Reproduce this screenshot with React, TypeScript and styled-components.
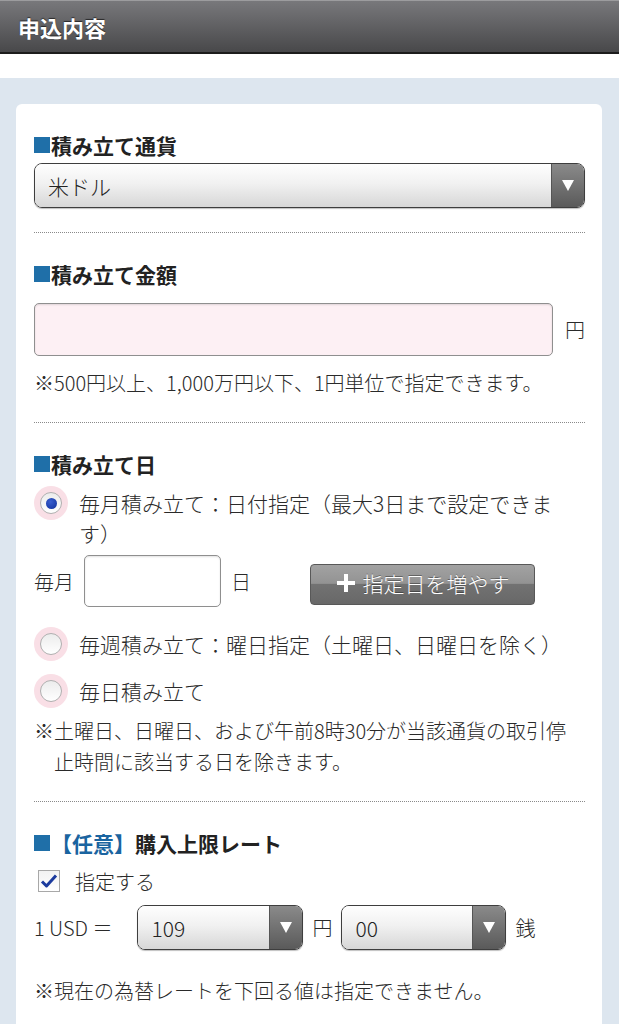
import React from 'react';
import styled, { createGlobalStyle } from 'styled-components';

const GlobalStyle = createGlobalStyle`
    html, body {
        margin: 0;
        padding: 0;
        background: #fff;
    }

    body {
        font-family: "Noto Sans CJK JP", "Noto Sans", sans-serif;
        font-weight: 300;
        color: #2a2a2a;
    }
`;

const Page = styled.div`
    width: 619px;
`;

const Header = styled.header`
    height: 51px;
    display: flex;
    align-items: center;
    padding-left: 18px;
    background: linear-gradient(#78787b, #48484a);
    border-top: 1px solid #9c9c9e;
    border-bottom: 2px solid #1c1c1c;
    color: #fff;
    font-size: 22px;
    font-weight: bold;
    text-shadow: 0 -1px 1px rgba(0, 0, 0, 0.6);
`;

const Main = styled.main`
    margin-top: 24px;
    background: #dde6ef;
    padding: 26px 17px 40px 16px;
`;

const Card = styled.div`
    background: #fff;
    border-radius: 6px;
    padding: 0 17px 0 18px;
`;

const Section = styled.section<{ last?: boolean }>`
    padding: 26px 0 24px;
    border-bottom: ${props => props.last ? 'none' : '1px dotted #8a8a8a'};
`;

const Heading = styled.h2`
    margin: 0;
    display: flex;
    align-items: center;
    font-size: 21px;
    line-height: 30px;
    font-weight: bold;
    color: #222;

    &::before {
        content: '';
        width: 16px;
        height: 16px;
        margin-right: 1px;
        background: #1f6fa8;
    }

    .optional {
        color: #1a64a0;
    }
`;

const SelectBox = styled.div<{ width?: number }>`
    display: flex;
    width: ${props => props.width ? props.width + 'px' : '100%'};
    height: 45px;
    box-sizing: border-box;
    border: 1px solid #3e3e3e;
    border-radius: 8px;
    overflow: hidden;
    box-shadow: 0 1px 1px rgba(0, 0, 0, 0.25);
    flex: none;

    .value {
        flex: 1;
        display: flex;
        align-items: center;
        padding-left: 13px;
        font-size: 21px;
        color: #222;
        background: linear-gradient(#fefefe, #f1f1f1 45%, #d7d7d7);
    }

    .arrow {
        width: 32px;
        display: flex;
        align-items: center;
        justify-content: center;
        border-left: 1px solid #555;
        background: linear-gradient(#8a8a8a, #5a5a5a);
    }

    .arrow::after {
        content: '';
        border-left: 6px solid transparent;
        border-right: 6px solid transparent;
        border-top: 11px solid #fff;
    }
`;

const Row = styled.div<{ top?: number; gap?: number }>`
    display: flex;
    align-items: center;
    margin-top: ${props => props.top || 0}px;
    gap: ${props => props.gap || 0}px;
    font-size: 20px;
`;

const Unit = styled.span<{ left?: number; right?: number }>`
    margin-left: ${props => props.left || 0}px;
    margin-right: ${props => props.right || 0}px;
    white-space: nowrap;
`;

const AmountInput = styled.input`
    flex: 1;
    height: 53px;
    box-sizing: border-box;
    border: 1px solid #8f8f8f;
    border-radius: 5px;
    background: #fdf0f4;
    box-shadow: inset 0 1px 2px rgba(0, 0, 0, 0.12);
    font-size: 20px;
    outline: none;
`;

const DayInput = styled.input`
    width: 137px;
    height: 52px;
    box-sizing: border-box;
    border: 1px solid #8f8f8f;
    border-radius: 5px;
    background: #fff;
    box-shadow: inset 0 1px 2px rgba(0, 0, 0, 0.12);
    font-size: 20px;
    outline: none;
`;

const Note = styled.p<{ top?: number }>`
    margin: ${props => props.top || 0}px 0 0;
    font-size: 20px;
    line-height: 31px;
    padding-left: 1em;
    text-indent: -1em;
    color: #2a2a2a;
`;

const RadioRow = styled.label<{ top?: number }>`
    display: flex;
    align-items: flex-start;
    margin-top: ${props => props.top || 0}px;
`;

const RadioHalo = styled.span`
    width: 34px;
    height: 34px;
    border-radius: 50%;
    background: #f9dfe6;
    flex: none;
    display: flex;
    align-items: center;
    justify-content: center;
`;

const RadioCircle = styled.span`
    width: 22px;
    height: 22px;
    box-sizing: border-box;
    border-radius: 50%;
    border: 1px solid #b0b0b0;
    background: linear-gradient(#ececec, #fff);
    display: flex;
    align-items: center;
    justify-content: center;
`;

const RadioDot = styled.span`
    width: 11px;
    height: 11px;
    border-radius: 50%;
    background: radial-gradient(circle at 40% 35%, #3a5fd0, #10309a);
`;

const RadioLabel = styled.span`
    margin-left: 11px;
    padding-top: 2px;
    padding-right: 8px;
    font-size: 21px;
    line-height: 30px;
    color: #2a2a2a;
`;

const AddButton = styled.button`
    width: 225px;
    height: 41px;
    margin-left: 49px;
    margin-top: 6px;
    box-sizing: border-box;
    border: 1px solid #585858;
    border-radius: 4px;
    background: linear-gradient(#a2a2a2 0%, #939393 47%, #727272 50%, #686868 100%);
    color: #fff;
    font-family: inherit;
    font-weight: 300;
    font-size: 21px;
    display: flex;
    align-items: center;
    justify-content: center;
    gap: 7px;
    padding: 0 0 2px;
    text-shadow: 0 -1px 0 rgba(0, 0, 0, 0.35);
`;

const CheckRow = styled.label`
    display: flex;
    align-items: center;
    height: 30px;
    margin-top: 8px;
    padding-left: 4px;
    font-size: 20px;
`;

const CheckBox = styled.span`
    width: 22px;
    height: 22px;
    box-sizing: border-box;
    border: 1px solid #a8a8a8;
    background: linear-gradient(#f2f2f2, #fff);
    display: flex;
    align-items: center;
    justify-content: center;
    margin-right: 15px;
`;

function Select (props: { value: string; width?: number }) {
    return <SelectBox width={props.width}>
        <div className='value'>{props.value}</div>
        <div className='arrow'/>
    </SelectBox>
}

function Radio (props: { checked?: boolean; label: string; top?: number }) {
    return <RadioRow top={props.top}>
        <RadioHalo>
            <RadioCircle>
                {props.checked && <RadioDot/>}
            </RadioCircle>
        </RadioHalo>
        <RadioLabel>{props.label}</RadioLabel>
    </RadioRow>
}

export default function App () {
    return <Page>
        <GlobalStyle/>
        <Header>申込内容</Header>

        <Main>
            <Card>
                <Section>
                    <Heading>積み立て通貨</Heading>
                    <Row top={3}>
                        <Select value='米ドル'/>
                    </Row>
                </Section>

                <Section>
                    <Heading>積み立て金額</Heading>
                    <Row top={14} gap={12}>
                        <AmountInput type='text'/>
                        <span>円</span>
                    </Row>
                    <Note top={11}>※500円以上、1,000万円以下、1円単位で指定できます。</Note>
                </Section>

                <Section>
                    <Heading>積み立て日</Heading>
                    <Radio top={7} checked label='毎月積み立て：日付指定（最大3日まで設定できます）'/>
                    <Row top={7} gap={10}>
                        <span>毎月</span>
                        <DayInput type='text'/>
                        <span>日</span>
                        <AddButton>
                            <svg width='20' height='20' viewBox='0 0 20 20'>
                                <path d='M10 1v18M1 10h18' stroke='#fff' strokeWidth='4'/>
                            </svg>
                            指定日を増やす
                        </AddButton>
                    </Row>
                    <Radio top={20} label='毎週積み立て：曜日指定（土曜日、日曜日を除く）'/>
                    <Radio top={13} label='毎日積み立て'/>
                    <Note top={7}>※土曜日、日曜日、および午前8時30分が当該通貨の取引停止時間に該当する日を除きます。</Note>
                </Section>

                <Section last>
                    <Heading><span className='optional'>【任意】</span>購入上限レート</Heading>
                    <CheckRow>
                        <CheckBox>
                            <svg width='18' height='16' viewBox='0 0 18 16'>
                                <path d='M2 8.5l4.5 4.5L16 2.5' fill='none' stroke='#1c3b9e' strokeWidth='3' strokeLinejoin='round'/>
                            </svg>
                        </CheckBox>
                        指定する
                    </CheckRow>
                    <Row top={9}>
                        <Unit right={25}>1 USD ＝</Unit>
                        <Select value='109' width={166}/>
                        <Unit left={9} right={9}>円</Unit>
                        <Select value='00' width={165}/>
                        <Unit left={9}>銭</Unit>
                    </Row>
                    <Note top={25}>※現在の為替レートを下回る値は指定できません。</Note>
                </Section>
            </Card>
        </Main>
    </Page>
}
